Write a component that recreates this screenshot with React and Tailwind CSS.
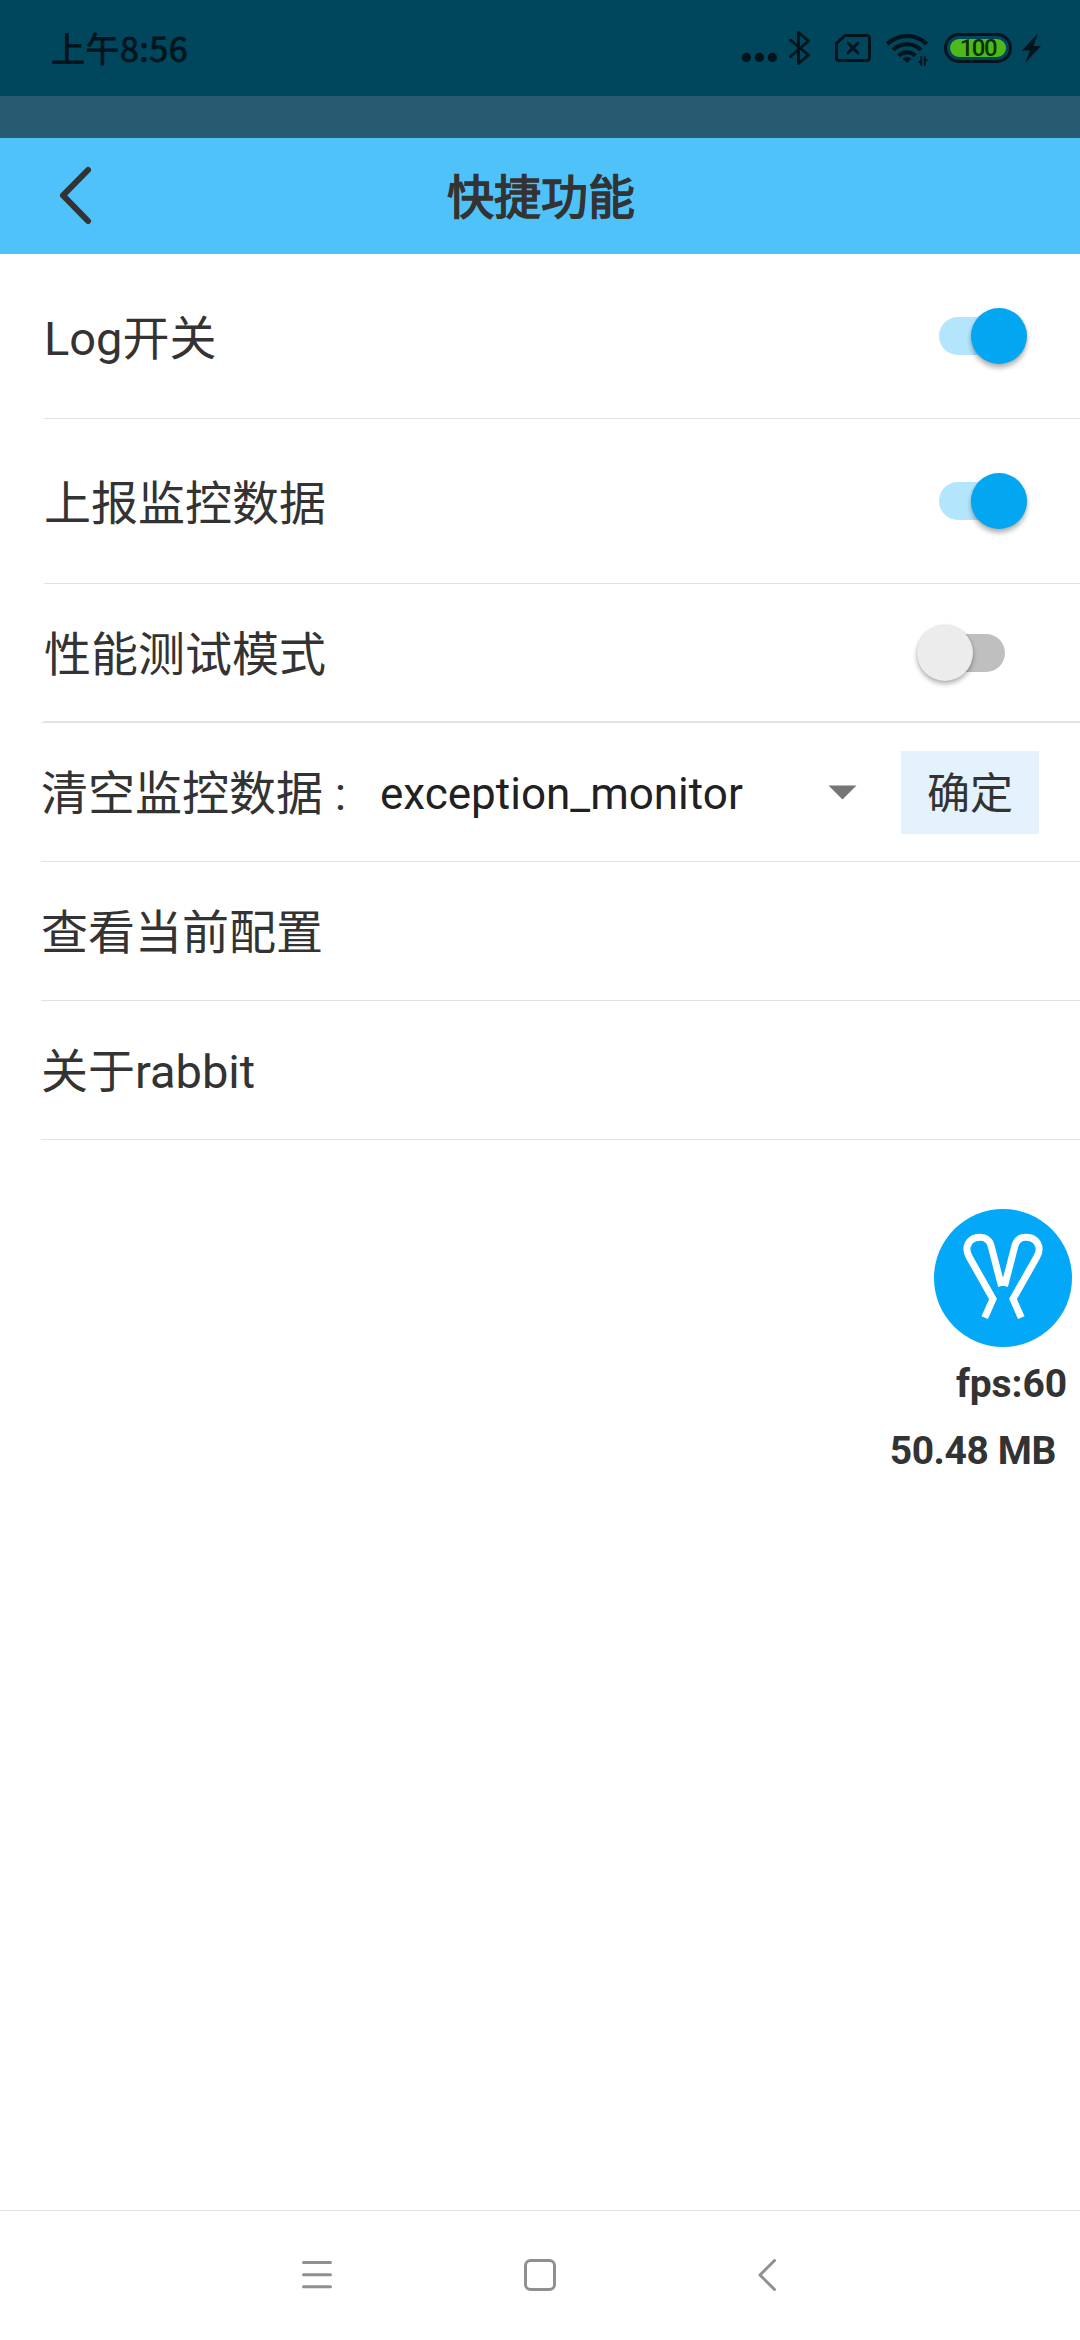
import React from "react";

const INK = "#01141b";

function StatusBar() {
  return (
    <div className="flex h-24 items-center bg-[#00465c] pl-[51px] text-[#01141b]">
      <span className="flex-1 font-['Noto_Sans_CJK_SC',sans-serif] text-[34px] leading-[48px] font-normal tracking-[0.5px] [-webkit-text-stroke:0.8px_#01141b]">
        上午8:56
      </span>
      <svg className="h-24 w-10" viewBox="740 0 40 96" fill={INK}>
        <circle cx="746.4" cy="57.4" r="4.6" />
        <circle cx="759.4" cy="57.4" r="4.6" />
        <circle cx="772.4" cy="57.4" r="4.6" />
      </svg>
      <svg className="h-24 w-[50px]" viewBox="780 0 50 96" fill="none" stroke={INK} strokeWidth="2.8" strokeLinejoin="round" strokeLinecap="round">
        <path d="M790.5 40.2 808.5 55 798.5 63.5V32.5L808.5 41 790.5 56.5" />
      </svg>
      <svg className="h-24 w-[50px]" viewBox="830 0 50 96" fill="none" stroke={INK} strokeWidth="3" strokeLinejoin="round" strokeLinecap="round">
        <path d="M845 35.5H867a2.5 2.5 0 0 1 2.5 2.5V58a2.5 2.5 0 0 1-2.5 2.5H839a2.5 2.5 0 0 1-2.5-2.5V43.5Z" />
        <path d="M848 43 858 53M858 43 848 53" />
      </svg>
      <svg className="h-24 w-[60px]" viewBox="880 0 60 96" fill="none" stroke={INK} strokeWidth="4">
        <path d="M887.3 44a28 28 0 0 1 39.4 0" />
        <path d="M893 49.9a20 20 0 0 1 28 0" />
        <path d="M898.7 55.6a12 12 0 0 1 16.6 0" />
        <path d="M907 63 902.7 58.8a6.2 6.2 0 0 1 8.6 0Z" fill={INK} stroke="none" />
        <path d="M921.2 56V65.5M924.8 66V56.5" strokeWidth="2" />
        <path d="M918 61 922 66V61ZM928 61 924 56V61Z" fill={INK} stroke="none" />
      </svg>
      <div className="ml-[4px] flex h-[30px] w-[68px] items-center justify-center rounded-full border-[3px] border-[#01141b]">
        <div className="flex h-[18px] w-[56px] items-center justify-center rounded-full bg-[#4fb91c]">
          <span className="font-[Roboto,sans-serif] text-[24px] leading-[18px] font-medium tracking-[-1.4px] text-[#0b2f0a]">100</span>
        </div>
      </div>
      <svg className="h-24 w-[68px]" viewBox="1012 0 68 96" fill={INK}>
        <path d="M1038 33.5 1022 50.5H1030L1025.5 62.5 1041 46H1033.5Z" />
      </svg>
    </div>
  );
}

function Toggle({ on }) {
  return on ? (
    <div className="flex h-[38px] w-[88px] items-center rounded-full bg-[linear-gradient(#b3e5fc,#b3e5fc)] bg-[length:60px_38px] bg-no-repeat">
      <div className="ml-[32px] size-14 shrink-0 rounded-full bg-[#03a6f1] shadow-[0_4px_5px_rgba(0,0,0,0.3),0_0_2px_rgba(0,0,0,0.12)]" />
    </div>
  ) : (
    <div className="flex h-[38px] w-[88px] items-center rounded-full bg-[linear-gradient(#bfbfbf,#bfbfbf)] bg-[length:60px_38px] bg-right bg-no-repeat">
      <div className="size-14 shrink-0 rounded-full bg-[#ececec] shadow-[0_3px_5px_rgba(0,0,0,0.3),0_0_2px_rgba(0,0,0,0.12)]" />
    </div>
  );
}

function SwitchRow({ label, on, className }) {
  return (
    <div className={`ml-11 flex items-center justify-between border-b border-[#e2e2e2] ${className}`}>
      <span className="pt-[5px]">{label}</span>
      <Toggle on={on} />
    </div>
  );
}

function Row({ children }) {
  return (
    <div className="ml-[41px] flex h-[139px] items-center border-b border-[#e2e2e2]">{children}</div>
  );
}

export default function App() {
  return (
    <div className="flex h-[2340px] w-[1080px] flex-col bg-white font-[Roboto,'Noto_Sans_CJK_SC',sans-serif] text-[47px] leading-[56px] text-[#333333]">
      <StatusBar />
      <div className="h-[42px] bg-[#265b72]" />
      <header className="grid h-[116px] grid-cols-[120px_1fr_120px] items-center bg-[#4fc3f9]">
        <svg className="h-[116px] w-[120px]" viewBox="0 138 120 116" fill="none" stroke="#333333" strokeWidth="6" strokeLinecap="round" strokeLinejoin="round">
          <path d="M88 170 63 195.3 88 221" />
        </svg>
        <h1 className="pt-[4px] pl-[2px] text-center font-normal [-webkit-text-stroke:1.5px_#333333]">快捷功能</h1>
      </header>

      <SwitchRow label="Log开关" on className="h-[165px] pr-[53px]" />
      <SwitchRow label="上报监控数据" on className="h-[165px] pr-[53px]" />
      <SwitchRow label="性能测试模式" on={false} className="h-[138px] pr-[75px]" />
      <div className="ml-[41px] h-px bg-[#e2e2e2]" />
      <Row>
        <span className="w-[339px] pt-[4px] whitespace-nowrap">清空监控数据 :</span>
        <span className="flex-1 pt-[4px] text-[44px] text-[#212121]">exception_monitor</span>
        <svg className="mr-[44px] h-[15px] w-[29px]" viewBox="0 0 29 15" fill="#757575">
          <path d="M0.5 0.5H28.5L14.5 14.5Z" />
        </svg>
        <button className="mr-[41px] h-[83px] w-[138px] bg-[#e3f2fd] pt-[4px] text-[43px]">确定</button>
      </Row>
      <Row>
        <span className="pt-[4px]">查看当前配置</span>
      </Row>
      <Row>
        <span className="pt-[4px]">关于rabbit</span>
      </Row>

      <div className="mt-[69px] flex flex-col items-end text-[39px] leading-[46px] font-bold">
        <svg className="mr-2 size-[138px]" viewBox="934 1209 138 138">
          <circle cx="1003" cy="1278" r="69" fill="#03a9f8" />
          <g fill="none" stroke="#ffffff" strokeWidth="7">
            <path d="M984.7 1317.7 993 1299 969.5 1257.5C966.3 1252 966.8 1248 967.2 1246.500C968.5 1241 973 1237.3 980 1237.3C985.5 1237.3 989.5 1240 991 1245.5L1001.5 1286" />
            <path d="M1021.3 1317.7 1013 1299 1036.5 1257.5C1039.7 1252 1039.2 1248 1038.8 1246.500C1037.5 1241 1033 1237.3 1026 1237.3C1020.5 1237.3 1016.5 1240 1015 1245.5L1004.5 1286" />
          </g>
        </svg>
        <span className="mt-[14px] mr-[13px] tracking-[-0.1px]">fps:60</span>
        <span className="mt-[21px] mr-[24px] tracking-[-0.4px]">50.48 MB</span>
      </div>

      <nav className="mt-auto flex h-[130px] justify-center border-t border-[#e2e2e2]">
        <svg className="h-[129px] w-[520px]" viewBox="280 2211 520 129" fill="none" stroke="#909090" strokeWidth="3" strokeLinecap="round" strokeLinejoin="round">
          <path d="M303.5 2262.5H330.5M303.5 2274.7H330.5M303.5 2286.7H330.5" />
          <rect x="525.5" y="2260.5" width="29" height="29" rx="5" />
          <path d="M774.5 2260.5 760 2275 774.5 2289.5" />
        </svg>
      </nav>
    </div>
  );
}
